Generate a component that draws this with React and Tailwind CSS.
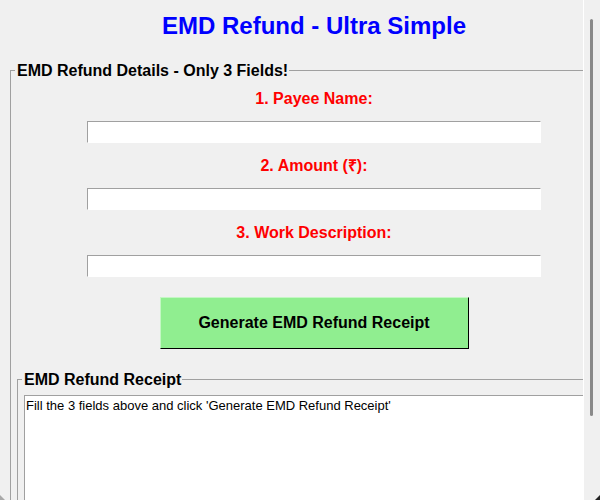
import React from "react";

function Field({ label, first }) {
  return (
    <div className={first ? "" : "mt-[14px]"}>
      <div className="text-center text-[16px] leading-[18px] font-bold text-[#ff0000]">{label}</div>
      <input
        type="text"
        className="mt-[13px] mx-auto block w-[454px] h-[22px] bg-white border-t border-l border-b border-r border-t-[#a0a0a0] border-l-[#a0a0a0] border-b-white border-r-white outline-none"
      />
    </div>
  );
}

export default function App() {
  return (
    <div className="relative w-[600px] h-[500px] overflow-hidden flex bg-[#f0f0f0] font-['Liberation_Sans',Arial,sans-serif] text-black">
      <div className="w-[583px] h-[500px] overflow-hidden shrink-0">
        <div className="w-[628px]">
          <div className="pt-[12px] h-[40px] text-center text-[24px] leading-[28px] font-bold text-[#0000ff]">
            EMD Refund - Ultra Simple
          </div>
          <fieldset className="mt-[22px] ml-[10px] w-[608px] border border-[#a0a0a0] min-w-0">
            <legend className="ml-[4px] pl-[2px] pr-[1px] text-[16px] leading-[17px] font-bold">
              EMD Refund Details - Only 3 Fields!
            </legend>
            <div className="pt-[11px]">
              <Field label="1. Payee Name:" first />
              <Field label="2. Amount (₹):" />
              <Field label="3. Work Description:" />
              <button className="mt-[20px] mx-auto block w-[309px] h-[52px] bg-[#90ee90] border border-t-[#c4f7c4] border-l-[#c4f7c4] border-b-black border-r-black text-[16px] font-bold leading-[18px] text-black">
                Generate EMD Refund Receipt
              </button>
              <fieldset className="mt-[22px] mx-[6px] border border-[#a0a0a0] min-w-0">
                <legend className="ml-[4px] pl-[2px] pr-[1px] text-[16px] leading-[17px] font-bold">
                  EMD Refund Receipt
                </legend>
                <div className="mt-[7px] ml-[6px] h-[200px] bg-white border-t border-l border-[#a0a0a0] pt-[2px] pl-[1px] text-[13px] leading-[16px]">
                  Fill the 3 fields above and click 'Generate EMD Refund Receipt'
                </div>
              </fieldset>
            </div>
          </fieldset>
        </div>
      </div>
      <div className="w-px h-[500px] bg-white shrink-0" />
      <div className="w-[16px] h-[500px] shrink-0 pt-[19px] pl-[6px]">
        <div className="w-[3px] h-[397px] rounded-full bg-[#8a8a8a]" />
      </div>
      <svg className="absolute right-0 bottom-0" width="5" height="5" viewBox="0 0 5 5">
        <path d="M5 0 L5 5 L0 5 Z" fill="#222" />
      </svg>
      <svg className="absolute left-0 bottom-0" width="5" height="5" viewBox="0 0 5 5">
        <path d="M0 0 L5 5 L0 5 Z" fill="#a8a8a8" />
      </svg>
    </div>
  );
}
